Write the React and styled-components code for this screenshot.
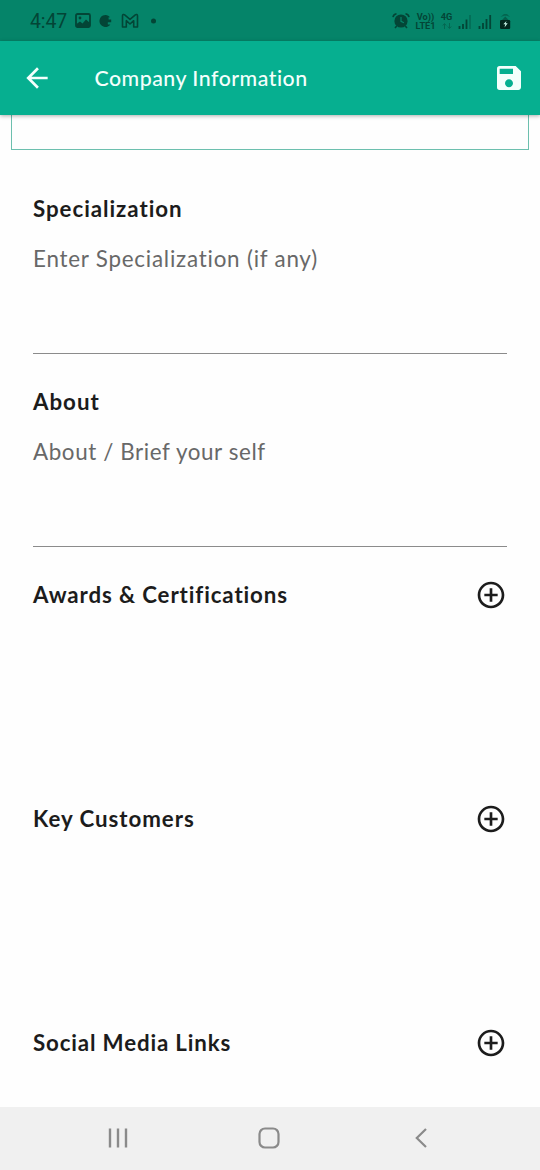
import React from 'react';
import styled, { createGlobalStyle, ThemeProvider } from 'styled-components';
import { MdAddCircleOutline, MdArrowBack, MdSave } from 'react-icons/md';

const theme = {
  primary: '#06af90',
  primaryDark: '#058469',
  statusInk: '#034536',
  text: '#1c1c1c',
  hint: '#686868',
  line: '#8b8b8b',
  nav: '#f0f0f0',
  navIcon: '#8a8a8a',
};

const GlobalStyle = createGlobalStyle`
  * {
    box-sizing: border-box;
  }

  body {
    margin: 0;
    background: #fefefe;
    font-family: Lato, 'Open Sans', sans-serif;
  }

  svg {
    display: block;
    flex: none;
  }
`;

const Screen = styled.div`
  display: flex;
  flex-direction: column;
  width: 540px;
  height: 1170px;
  overflow: hidden;
`;

const StatusBar = styled.header`
  display: flex;
  justify-content: space-between;
  flex: none;
  height: 41px;
  padding: 0 29px 0 30px;
  background: ${props => props.theme.primaryDark};
  color: ${props => props.theme.statusInk};
`;

const StatusGroup = styled.div`
  display: flex;
  align-items: center;
  height: 42px;
`;

const Clock = styled.span`
  width: 45px;
  padding-top: 2px;
  font: 400 19.5px/24px Roboto, sans-serif;
  letter-spacing: -0.1px;
`;

const Toolbar = styled.div`
  display: flex;
  align-items: center;
  flex: none;
  z-index: 1;
  height: 74px;
  padding: 0 15.5px 0 21px;
  background: ${props => props.theme.primary};
  box-shadow: 0 1px 4px rgba(0, 0, 0, 0.32);
  color: #f4fffc;
`;

const Title = styled.h1`
  flex: 1;
  margin: 0 0 0 41.5px;
  font-size: 21.3px;
  font-weight: 500;
  line-height: 28px;
  letter-spacing: ${props => props.$spacing}px;
`;

const Content = styled.main`
  display: flex;
  flex-direction: column;
  flex: 1;
`;

const FieldFrame = styled.div`
  flex: none;
  height: 35px;
  margin: 0 11px 0 11px;
  border: 1px solid #6cbfae;
  border-top: 0;
`;

const Field = styled.section`
  flex: none;
  height: 193px;
  margin: 0 33px;
  padding-top: 34px;
  border-bottom: 1px solid ${props => props.theme.line};
`;

const FirstField = styled(Field)`
  height: 204px;
  padding-top: 45px;
`;

const Heading = styled.h2`
  margin: 0;
  color: ${props => props.theme.text};
  font-size: 22.3px;
  font-weight: 700;
  line-height: 28px;
  letter-spacing: ${props => props.$spacing}px;
  white-space: nowrap;
`;

const Hint = styled.p`
  margin: 22px 0 0;
  color: ${props => props.theme.hint};
  font-size: 22.4px;
  line-height: 28px;
  letter-spacing: ${props => props.$spacing}px;
  white-space: nowrap;
`;

const AddRow = styled.section`
  display: flex;
  align-items: flex-start;
  justify-content: space-between;
  flex: none;
  height: 224px;
  padding: 32px 33px 0;

  ${Heading} {
    line-height: 32px;
  }

  &:last-child {
    flex: 1;
  }
`;

const NavBar = styled.nav`
  display: grid;
  grid-template-columns: 1fr 1fr 1fr;
  align-items: center;
  justify-items: center;
  flex: none;
  height: 63px;
  padding: 0 43px 2px 42px;
  background: ${props => props.theme.nav};
  color: ${props => props.theme.navIcon};
`;

const LeftIcons = () => (
  <svg width="85" height="20" viewBox="0 0 85 20">
    <rect x="1" y="3" width="14" height="13" rx="1.5" fill="none" stroke="currentColor" strokeWidth="1.8" />
    <circle cx="5" cy="7" r="1.4" fill="currentColor" />
    <path d="M1.5 13 5 10.5 7.5 12.5 11 8.5 15 12v3H1.5z" fill="currentColor" />
    <path d="M31 4a6 6 0 1 0 4.3 9.5h-2.5v-2.2h3.4V8.5h-2.6V6.2h1.5A6 6 0 0 0 31 4z" fill="currentColor" />
    <path
      d="M47.5 16V4.7c0-1.2 1.2-1.6 2.2-.8l5.3 4.4 5.3-4.4c1-.8 2.2-.4 2.2.8V16h-3.8V9.7L55 13l-3.7-3.3V16z"
      fill="none"
      stroke="currentColor"
      strokeWidth="1.6"
      strokeLinejoin="round"
    />
    <circle cx="78.5" cy="10" r="2.5" fill="currentColor" />
  </svg>
);

const AlarmIcon = () => (
  <svg width="18" height="18" viewBox="0 0 18 18">
    <circle cx="9" cy="9" r="6.6" fill="currentColor" />
    <path d="M1 5.2C1.3 3 2.5 2 4.5 1.7M17 5.2C16.7 3 15.5 2 13.5 1.7M4.7 14l-1.7 2M13.3 14l1.7 2" fill="none" stroke="currentColor" strokeWidth="1.6" />
    <path d="M9 5v4.3l2.9 1.4" fill="none" stroke="#058469" strokeWidth="1.2" />
  </svg>
);

const NetworkLabel = styled.span`
  display: flex;
  flex-direction: column;
  align-items: center;
  width: ${props => props.$width}px;
  margin-left: ${props => props.$gap}px;
  font: 700 9.2px/9px Roboto, sans-serif;
  white-space: nowrap;
`;

const DataArrows = () => (
  <svg width="10" height="9" viewBox="0 0 10 9" opacity="0.45">
    <path d="M2.5 8V3M.8 4.5 2.5 2.5l1.7 2M7.5 2v5M5.8 5.5l1.7 2 1.7-2" fill="none" stroke="currentColor" />
  </svg>
);

const SignalIcons = () => (
  <svg width="53" height="20" viewBox="0 0 53 20">
    <path d="M1.5 18v-3M5 18v-5M8.5 18V8.5" stroke="currentColor" strokeWidth="1.8" />
    <path d="M12 18V4" stroke="currentColor" strokeWidth="1.8" opacity="0.35" />
    <path d="M21.5 18v-3M25 18v-6M28.5 18V8M32.2 18V4" stroke="currentColor" strokeWidth="1.8" />
    <path d="M42.5 6 46 3h3l3 3-3-1.2h-3z" fill="currentColor" opacity="0.5" />
    <path d="M43 10l4.3-4.5L51.5 10z" fill="currentColor" opacity="0.6" />
    <rect x="42" y="9" width="10.2" height="9" rx="1.2" fill="#02271e" />
    <path d="M48.5 10l-3.2 3.3h2l-.8 3.2 3.2-4.2h-2z" fill="#c9f5e9" />
  </svg>
);

const RecentsIcon = () => (
  <svg width="20" height="20" viewBox="0 0 20 20">
    <path d="M2 .5v19M10 .5v19M18 .5v19" stroke="currentColor" strokeWidth="2.4" />
  </svg>
);

const HomeIcon = () => (
  <svg width="22" height="22" viewBox="0 0 22 22">
    <rect x="1.5" y="1.5" width="19" height="19" rx="5.5" fill="none" stroke="currentColor" strokeWidth="2.2" />
  </svg>
);

const BackIcon = () => (
  <svg width="12" height="20" viewBox="0 0 12 20">
    <path d="M11 1 1.8 10 11 19" fill="none" stroke="currentColor" strokeWidth="2.2" />
  </svg>
);

const sections = [
  { title: 'Awards & Certifications', spacing: 0.88 },
  { title: 'Key Customers', spacing: 0.95 },
  { title: 'Social Media Links', spacing: 0.84 },
];

const App = () => (
  <ThemeProvider theme={theme}>
    <GlobalStyle />
    <Screen>
      <StatusBar>
        <StatusGroup>
          <Clock>4:47</Clock>
          <LeftIcons />
        </StatusGroup>
        <StatusGroup>
          <AlarmIcon />
          <NetworkLabel $width={21} $gap={5}>
            <span>Vo))</span>
            <span>LTE1</span>
          </NetworkLabel>
          <NetworkLabel $width={13} $gap={4}>
            <span>4G</span>
            <DataArrows />
          </NetworkLabel>
          <NetworkLabel as="div" $width={53} $gap={5}>
            <SignalIcons />
          </NetworkLabel>
        </StatusGroup>
      </StatusBar>
      <Toolbar>
        <MdArrowBack size={32} />
        <Title $spacing={0.5}>Company Information</Title>
        <MdSave size={32} />
      </Toolbar>
      <Content>
        <FieldFrame />
        <FirstField>
          <Heading $spacing={0.95}>Specialization</Heading>
          <Hint $spacing={0.77}>Enter Specialization (if any)</Hint>
        </FirstField>
        <Field>
          <Heading $spacing={1}>About</Heading>
          <Hint $spacing={0.6}>About / Brief your self</Hint>
        </Field>
        {sections.map(({ title, spacing }) => (
          <AddRow key={title}>
            <Heading $spacing={spacing}>{title}</Heading>
            <MdAddCircleOutline size={32} color={theme.text} />
          </AddRow>
        ))}
      </Content>
      <NavBar>
        <RecentsIcon />
        <HomeIcon />
        <BackIcon />
      </NavBar>
    </Screen>
  </ThemeProvider>
);

export default App;
